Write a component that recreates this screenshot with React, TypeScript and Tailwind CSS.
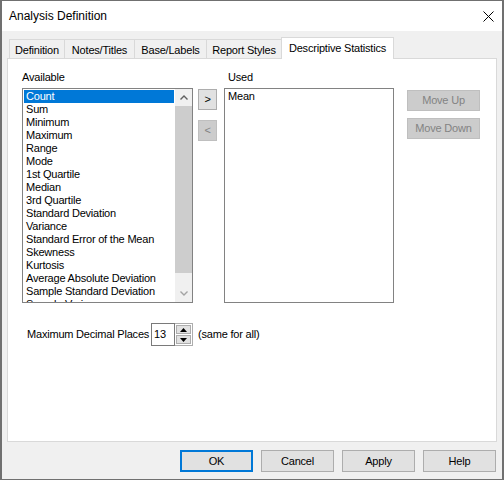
import React from 'react';

const available = [
  'Count',
  'Sum',
  'Minimum',
  'Maximum',
  'Range',
  'Mode',
  '1st Quartile',
  'Median',
  '3rd Quartile',
  'Standard Deviation',
  'Variance',
  'Standard Error of the Mean',
  'Skewness',
  'Kurtosis',
  'Average Absolute Deviation',
  'Sample Standard Deviation',
  'Sample Variance',
];

const tabs = [
  { label: 'Definition', w: 'w-[55px]' },
  { label: 'Notes/Titles', w: 'w-[70px]' },
  { label: 'Base/Labels', w: 'w-[72px]' },
  { label: 'Report Styles', w: 'w-[75px]' },
];

function Chevron({ up, color }: { up?: boolean; color: string }) {
  return (
    <svg width="8" height="5" viewBox="0 0 8 5">
      <path
        d={up ? 'M0.5 4.5 L4 1 L7.5 4.5' : 'M0.5 0.5 L4 4 L7.5 0.5'}
        fill="none"
        stroke={color}
        strokeWidth="1.4"
      />
    </svg>
  );
}

function Triangle({ up }: { up?: boolean }) {
  return (
    <svg width="7" height="4" viewBox="0 0 7 4">
      <path d={up ? 'M0 4 L3.5 0 L7 4 Z' : 'M0 0 L3.5 4 L7 0 Z'} fill="#000" />
    </svg>
  );
}

export default function App() {
  return (
    <div className="w-[504px] h-[480px] flex flex-col border-x-2 border-y border-[#707070] bg-[#f0f0f0] font-['Liberation_Sans',Arial,sans-serif] text-[11px] leading-[13px] text-black">
      {/* title bar */}
      <div className="h-[30px] shrink-0 bg-white flex items-center justify-between pl-[7px] pr-[8px]">
        <span className="text-[12px]">Analysis Definition</span>
        <svg width="11" height="11" viewBox="0 0 11 11">
          <path d="M0.5 0.5 L10.5 10.5 M10.5 0.5 L0.5 10.5" stroke="#000" strokeWidth="1" />
        </svg>
      </div>

      <div className="flex-1 flex flex-col pt-[6px] px-[5px] pb-[7px] tracking-[-0.2px]">
        {/* tabs */}
        <div className="h-[21px] shrink-0 flex items-end pl-[2px]">
          {tabs.map((t) => (
            <div
              key={t.label}
              className={`${t.w} h-[19px] border-t border-l border-[#d9d9d9] bg-[#f0f0f0] flex justify-center pt-[4px] whitespace-nowrap`}
            >
              {t.label}
            </div>
          ))}
          <div className="relative z-10 w-[113px] h-[22px] -mb-px border-x border-t border-[#d9d9d9] bg-white flex justify-center pt-[4px] whitespace-nowrap">
            Descriptive Statistics
          </div>
        </div>

        {/* panel */}
        <div className="flex-1 border border-[#d9d9d9] bg-white pl-[14px] pt-[12px]">
          <div className="flex items-start">
            {/* available */}
            <div className="w-[171px]">
              <div className="h-[13px] mb-[4px]">Available</div>
              <div className="h-[215px] border border-[#828282] flex">
                <div className="flex-1 overflow-hidden pt-[1px] pl-[1px] pr-[1px]">
                  {available.map((item, i) => (
                    <div
                      key={item}
                      className={`h-[13px] pl-[2px] whitespace-nowrap ${i === 0 ? 'bg-[#0078d7] text-white' : ''}`}
                    >
                      {item}
                    </div>
                  ))}
                </div>
                <div className="w-[17px] flex flex-col bg-[#f0f0f0]">
                  <div className="h-[17px] flex items-center justify-center">
                    <Chevron up color="#606060" />
                  </div>
                  <div className="h-[167px] bg-[#cdcdcd]" />
                  <div className="flex-1" />
                  <div className="h-[17px] flex items-center justify-center">
                    <Chevron color="#a3a3a3" />
                  </div>
                </div>
              </div>
            </div>

            {/* add / remove */}
            <div className="ml-[5px] mt-[18px] flex flex-col">
              <div className="w-[19px] h-[21px] border border-[#adadad] bg-[#e1e1e1] flex items-center justify-center">
                &gt;
              </div>
              <div className="mt-[10px] w-[19px] h-[21px] border border-[#bfbfbf] bg-[#cccccc] text-[#838383] flex items-center justify-center">
                &lt;
              </div>
            </div>

            {/* used */}
            <div className="ml-[7px] w-[170px]">
              <div className="h-[13px] mb-[4px] pl-[4px]">Used</div>
              <div className="h-[215px] border border-[#828282] pt-[1px] pl-[3px]">
                <div className="h-[13px]">Mean</div>
              </div>
            </div>

            {/* move */}
            <div className="ml-[13px] mt-[19px] flex flex-col gap-[7px]">
              <div className="w-[73px] h-[21px] border border-[#bfbfbf] bg-[#cccccc] text-[#838383] flex items-center justify-center">
                Move Up
              </div>
              <div className="w-[73px] h-[21px] border border-[#bfbfbf] bg-[#cccccc] text-[#838383] flex items-center justify-center">
                Move Down
              </div>
            </div>
          </div>

          {/* decimal places */}
          <div className="mt-[20px] pl-[5px] flex items-center h-[23px]">
            <div className="w-[124px] whitespace-nowrap">Maximum Decimal Places</div>
            <div className="w-[24px] h-[23px] border border-[#7a7a7a] pl-[2px] flex items-center">13</div>
            <div className="w-[18px] h-[23px] border border-[#adadad] border-l-0 flex flex-col gap-[1px] p-[1px] bg-white">
              <div className="flex-1 bg-[#e1e1e1] border border-[#adadad] flex items-center justify-center">
                <Triangle up />
              </div>
              <div className="flex-1 bg-[#e1e1e1] border border-[#adadad] flex items-center justify-center">
                <Triangle />
              </div>
            </div>
            <div className="ml-[5px]">(same for all)</div>
          </div>
        </div>

        {/* buttons */}
        <div className="mt-[8px] flex justify-end gap-[8px] pr-[1px]">
          <div className="w-[73px] h-[22px] border-2 border-[#0078d7] bg-[#e1e1e1] flex items-center justify-center">OK</div>
          <div className="w-[73px] h-[22px] border border-[#adadad] bg-[#e1e1e1] flex items-center justify-center">Cancel</div>
          <div className="w-[73px] h-[22px] border border-[#adadad] bg-[#e1e1e1] flex items-center justify-center">Apply</div>
          <div className="w-[73px] h-[22px] border border-[#adadad] bg-[#e1e1e1] flex items-center justify-center">Help</div>
        </div>
      </div>
    </div>
  );
}
